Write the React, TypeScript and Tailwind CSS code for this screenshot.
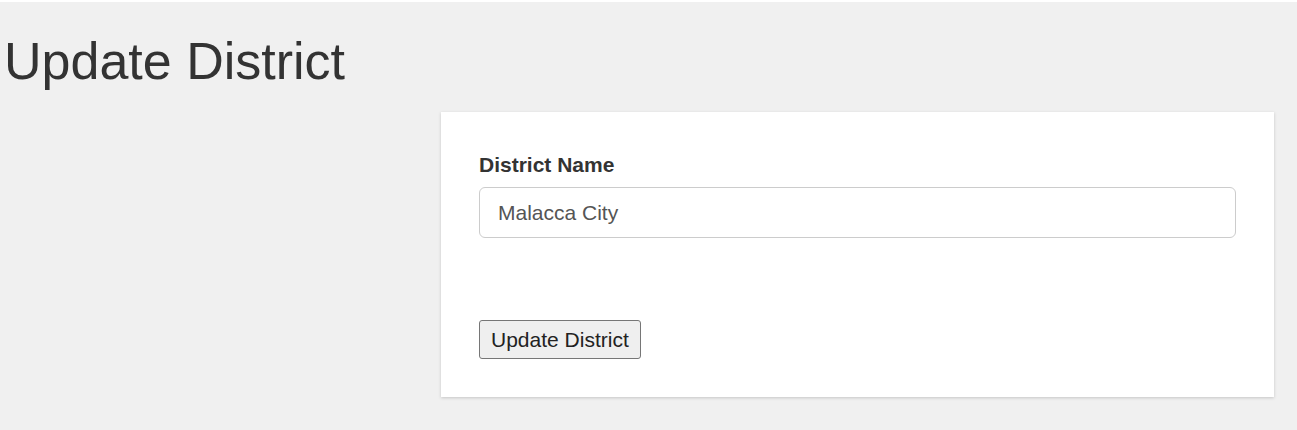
export default function App() {
  return (
    <div className="min-h-[430px] bg-[#f0f0f0] font-['Liberation_Sans',Arial,sans-serif] text-[#333]">
      <div className="h-[2px] bg-white" />
      <h1 className="pl-[4px] pt-[28px] text-[52px] leading-[62px] font-normal">Update District</h1>
      <div className="pl-[441px] pr-[23px] pt-[20px]">
        <form
          className="flex flex-col bg-white px-[38px] pt-[38px] pb-[38px] shadow-[0_1px_3px_rgba(0,0,0,0.18)]"
          onSubmit={(e) => e.preventDefault()}
        >
          <label htmlFor="districtName" className="mb-[7px] text-[21px] leading-[30px] font-bold">
            District Name
          </label>
          <input
            id="districtName"
            defaultValue="Malacca City"
            className="h-[51px] rounded-[6px] border border-[#ccc] px-[18px] text-[21px] text-[#555] outline-none"
          />
          <div className="mt-[82px]">
            <button
              type="submit"
              className="h-[39px] rounded-[3px] border border-[#767676] bg-[#efefef] px-[11px] text-[21px] leading-none text-[#222]"
            >
              Update District
            </button>
          </div>
        </form>
      </div>
    </div>
  )
}
